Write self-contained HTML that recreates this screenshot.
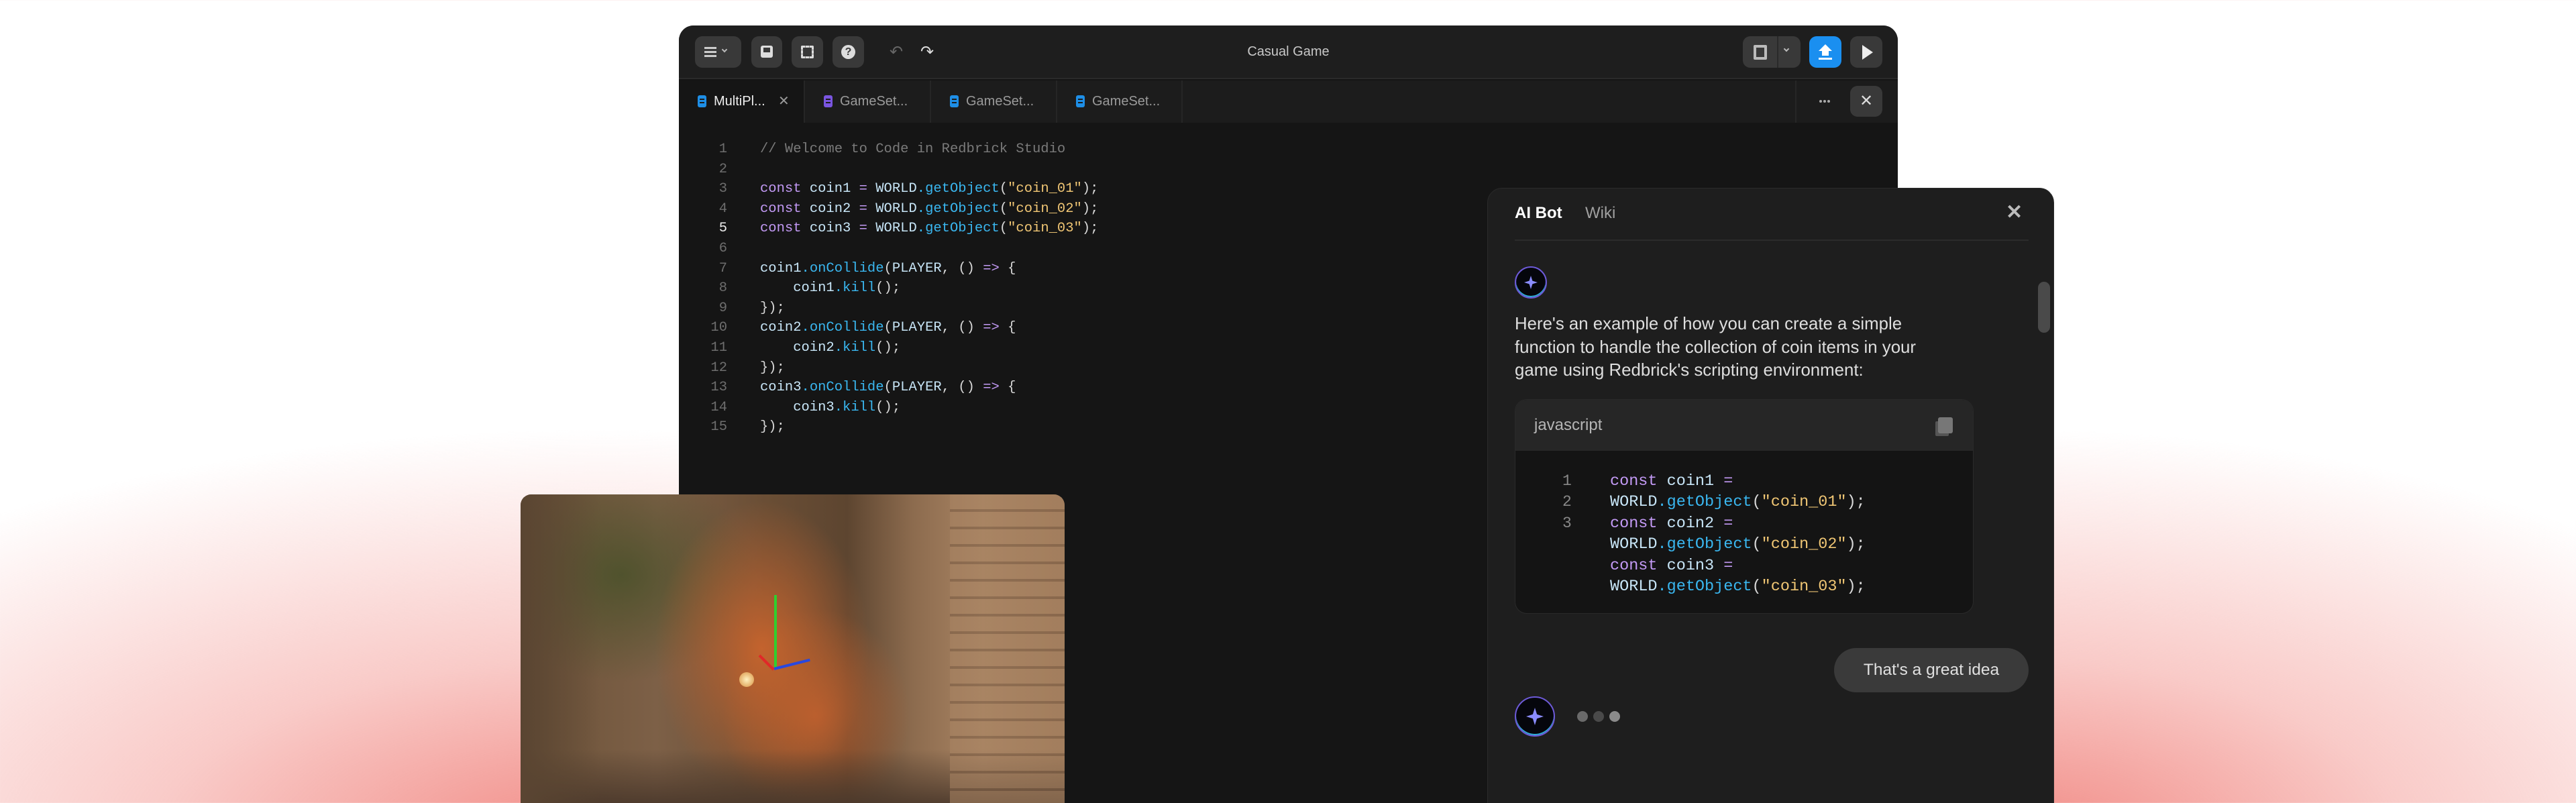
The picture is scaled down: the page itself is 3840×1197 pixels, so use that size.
<!DOCTYPE html>
<html><head><meta charset="utf-8"><style>
*{margin:0;padding:0;box-sizing:border-box}
html,body{width:3840px;height:1197px;overflow:hidden}
body{position:relative;font-family:"Liberation Sans",sans-serif;
background:
radial-gradient(ellipse 1500px 620px at 900px 1260px,rgba(240,130,124,.95),rgba(244,160,155,.55) 45%,rgba(255,255,255,0) 100%),
radial-gradient(ellipse 1300px 620px at 3000px 1260px,rgba(240,130,124,.95),rgba(244,160,155,.55) 45%,rgba(255,255,255,0) 100%),
#fff}
.mono{font-family:"Liberation Mono",monospace}
.win{position:absolute;left:1012px;top:38px;width:1817px;height:1200px;background:#151515;border-radius:22px;overflow:hidden}
.tb{position:absolute;left:0;top:0;right:0;height:80px;background:#1e1e1e;border-bottom:2px solid #2a2a2a}
.btn{position:absolute;top:16px;height:47px;background:#393939;border-radius:11px}
.tabs{position:absolute;left:0;top:82px;right:0;height:63px;background:#1c1c1c}
.tab{position:absolute;top:0;height:63px;border-right:2px solid #262626;color:#9a9a9a;font-size:20px;line-height:63px}
.tab i{position:absolute;left:28px;top:22px;width:13px;height:18px;border-radius:3px;background:#1e8ee6}
.tab i:before,.tab i:after{content:"";position:absolute;left:3px;width:7px;height:2px;background:#1c1c1c}
.tab i:before{top:5px}.tab i:after{top:10px}
.tab span{position:absolute;left:52px}
.code{position:absolute;left:0;top:170px;font-size:20.5px;line-height:29.6px;color:#c8e6f8;white-space:pre}
.ln{position:absolute;left:30px;width:42px;text-align:right;color:#6e6e6e}
.cl{position:absolute;left:121px}
.k{color:#c39af5}.m{color:#3ab7f0}.s{color:#f0c674}.p{color:#d8d8d8}.c{color:#7a7a7a}
.chat{position:absolute;left:2217px;top:280px;width:845px;height:960px;background:#1e1e1e;border-radius:22px;border:1px solid #2a2a2a;z-index:6}
.av{position:absolute;border-radius:50%;background:#05060c;border:2px solid #6d5ad8;box-shadow:inset 0 -2px 0 #2fb0d8}
.game{position:absolute;z-index:5;left:776px;top:737px;width:811px;height:470px;border-radius:16px 16px 0 0;overflow:hidden;
background:
radial-gradient(ellipse 160px 220px at 360px 230px,rgba(200,100,45,.95),rgba(170,85,40,0) 100%),
radial-gradient(ellipse 140px 160px at 440px 330px,rgba(190,95,45,.9),rgba(170,85,40,0) 100%),
radial-gradient(ellipse 200px 160px at 150px 120px,rgba(70,80,40,.8),rgba(70,80,40,0) 100%),
linear-gradient(90deg,#6b5238 0%,#7d6047 25%,#6a4e35 45%,#5d4530 60%,#8c6b4e 72%,#a98463 85%,#9a7656 100%)}
</style></head><body>

<div class="win">
 <div class="tb">
  <div class="btn" style="left:24px;width:69px">
   <div style="position:absolute;left:14px;top:16px;width:18px;height:3px;background:#ccc;box-shadow:0 6px 0 #ccc,0 12px 0 #ccc"></div>
   <div style="position:absolute;left:41px;top:17px;width:6px;height:6px;border-right:2px solid #bbb;border-bottom:2px solid #bbb;transform:rotate(45deg)"></div>
  </div>
  <div class="btn" style="left:108px;width:46px"><div style="position:absolute;left:14px;top:14px;width:18px;height:18px;background:#ddd;border-radius:3px"></div><div style="position:absolute;left:18px;top:17px;width:10px;height:7px;background:#393939"></div></div>
  <div class="btn" style="left:168px;width:47px"><div style="position:absolute;left:14px;top:14px;width:19px;height:19px;border:3px dashed #ddd;border-radius:2px"></div></div>
  <div class="btn" style="left:229px;width:47px"><div style="position:absolute;left:13px;top:13px;width:21px;height:21px;border-radius:50%;background:#ddd;color:#393939;font:bold 16px/21px 'Liberation Sans';text-align:center">?</div></div>
  <div style="position:absolute;left:314px;top:25px;color:#666;font-size:24px">&#x21B6;</div>
  <div style="position:absolute;left:360px;top:25px;color:#ddd;font-size:24px">&#x21B7;</div>
  <div style="position:absolute;left:0;right:0;top:28px;text-align:center;color:#c8c8c8;font-size:20px">Casual Game</div>
  <div class="btn" style="left:1586px;width:86px"><div style="position:absolute;left:51px;top:0;width:2px;height:47px;background:#2a2a2a"></div>
   <div style="position:absolute;left:16px;top:13px;width:20px;height:22px;border:4px solid #bbb;border-radius:2px"></div>
   <div style="position:absolute;left:62px;top:16px;width:6px;height:6px;border-right:2px solid #bbb;border-bottom:2px solid #bbb;transform:rotate(45deg)"></div></div>
  <div class="btn" style="left:1685px;width:48px;background:#1a8ff0">
   <div style="position:absolute;left:14px;top:12px;width:0;height:0;border-left:10px solid transparent;border-right:10px solid transparent;border-bottom:10px solid #fff"></div>
   <div style="position:absolute;left:19px;top:21px;width:10px;height:8px;background:#fff"></div>
   <div style="position:absolute;left:14px;top:32px;width:20px;height:3px;background:#fff"></div></div>
  <div class="btn" style="left:1746px;width:48px"><div style="position:absolute;left:18px;top:13px;border-top:11px solid transparent;border-bottom:11px solid transparent;border-left:16px solid #eee"></div></div>
 </div>
 <div class="tabs">
  <div class="tab" style="left:0;width:188px;background:#151515;color:#eee"><i></i><span>MultiPl...</span><span style="left:148px;color:#999">✕</span></div>
  <div class="tab" style="left:188px;width:188px"><i style="background:#7a55e0"></i><span>GameSet...</span></div>
  <div class="tab" style="left:376px;width:188px"><i></i><span>GameSet...</span></div>
  <div class="tab" style="left:564px;width:187px"><i></i><span>GameSet...</span></div>
  <div style="position:absolute;left:1664px;top:0;width:2px;height:63px;background:#262626"></div>
  <div style="position:absolute;left:1700px;top:29px;width:4px;height:4px;border-radius:50%;background:#aaa;box-shadow:6px 0 #aaa,12px 0 #aaa"></div>
  <div class="btn" style="left:1746px;top:8px;width:48px;height:46px;color:#ddd;font-size:24px;line-height:46px;text-align:center">✕</div>
 </div>
 <div class="code mono"><div class="ln">1<br>2<br>3<br>4<br><span style="color:#eee">5</span><br>6<br>7<br>8<br>9<br>10<br>11<br>12<br>13<br>14<br>15</div><div class="cl"><span class="c">// Welcome to Code in Redbrick Studio</span>

<span class="k">const</span> coin1 <span class="k">=</span> WORLD<span class="m">.getObject</span><span class="p">(</span><span class="s">"coin_01"</span><span class="p">);</span>
<span class="k">const</span> coin2 <span class="k">=</span> WORLD<span class="m">.getObject</span><span class="p">(</span><span class="s">"coin_02"</span><span class="p">);</span>
<span class="k">const</span> coin3 <span class="k">=</span> WORLD<span class="m">.getObject</span><span class="p">(</span><span class="s">"coin_03"</span><span class="p">);</span>

coin1<span class="m">.onCollide</span><span class="p">(</span>PLAYER<span class="p">, () </span><span class="k">=&gt;</span><span class="p"> {</span>
    coin1<span class="m">.kill</span><span class="p">();</span>
<span class="p">});</span>
coin2<span class="m">.onCollide</span><span class="p">(</span>PLAYER<span class="p">, () </span><span class="k">=&gt;</span><span class="p"> {</span>
    coin2<span class="m">.kill</span><span class="p">();</span>
<span class="p">});</span>
coin3<span class="m">.onCollide</span><span class="p">(</span>PLAYER<span class="p">, () </span><span class="k">=&gt;</span><span class="p"> {</span>
    coin3<span class="m">.kill</span><span class="p">();</span>
<span class="p">});</span></div></div>
</div>

<div class="game">
 <div style="position:absolute;left:0;top:380px;width:811px;height:90px;background:linear-gradient(180deg,rgba(60,45,35,0),#4a382b)"></div>
 <div style="position:absolute;left:640px;top:0;width:171px;height:470px;background:repeating-linear-gradient(180deg,#a98463 0 22px,#7a5c44 22px 26px);opacity:.55"></div>
 <div style="position:absolute;left:0;top:0;width:120px;height:470px;background:linear-gradient(90deg,#5a4532,rgba(90,69,50,0))"></div>
 <div style="position:absolute;left:378px;top:150px;width:4px;height:110px;background:#2ed02e"></div>
 <div style="position:absolute;left:378px;top:258px;width:55px;height:4px;background:#2848e0;transform:rotate(-14deg);transform-origin:left"></div>
 <div style="position:absolute;left:356px;top:238px;width:30px;height:4px;background:#e02828;transform:rotate(45deg);transform-origin:left"></div>
 <div style="position:absolute;left:326px;top:265px;width:22px;height:22px;border-radius:50%;background:radial-gradient(#fff2c0,#d89040)"></div>
</div>

<div class="chat">
 <div style="position:absolute;left:40px;top:23px;color:#fff;font-weight:bold;font-size:24px">AI Bot</div>
 <div style="position:absolute;left:145px;top:23px;color:#a0a0a0;font-size:24px">Wiki</div>
 <div style="position:absolute;left:772px;top:18px;color:#bbb;font-size:30px;font-weight:bold">✕</div>
 <div style="position:absolute;left:40px;top:76px;width:766px;height:2px;background:#2c2c2c"></div>
 <div style="position:absolute;left:820px;top:139px;width:18px;height:76px;border-radius:9px;background:#4a4a4a"></div>
 <div class="av" style="left:40px;top:116px;width:48px;height:48px"><div style="position:absolute;left:12px;top:12px;width:20px;height:20px;background:#8a8cff;clip-path:polygon(50% 0,62% 38%,100% 50%,62% 62%,50% 100%,38% 62%,0 50%,38% 38%)"></div></div>
 <div style="position:absolute;left:40px;top:185px;width:660px;color:#dedede;font-size:25.8px;line-height:34.5px">Here's an example of how you can create a simple function to handle the collection of coin items in your game using Redbrick's scripting environment:</div>
 <div style="position:absolute;left:40px;top:314px;width:684px;height:320px;border-radius:18px;background:#141414;border:1px solid #2a2a2a;overflow:hidden">
  <div style="height:76px;background:#262626;color:#b5b5b5;font-size:24px;line-height:76px;padding-left:28px">javascript</div>
  <div style="position:absolute;left:630px;top:26px;width:22px;height:24px;background:#777;border-radius:3px;box-shadow:-5px 5px 0 -1px #555"></div>
  <div class="mono" style="position:absolute;left:70px;top:106px;color:#888;font-size:23px;line-height:31.4px">1<br>2<br>3</div>
  <div class="mono" style="position:absolute;left:141px;top:106px;color:#c8e6f8;font-size:23.5px;line-height:31.4px;white-space:pre"><span class="k">const</span> coin1 <span class="k">=</span>
WORLD<span class="m">.getObject</span><span class="p">(</span><span class="s">"coin_01"</span><span class="p">);</span>
<span class="k">const</span> coin2 <span class="k">=</span>
WORLD<span class="m">.getObject</span><span class="p">(</span><span class="s">"coin_02"</span><span class="p">);</span>
<span class="k">const</span> coin3 <span class="k">=</span>
WORLD<span class="m">.getObject</span><span class="p">(</span><span class="s">"coin_03"</span><span class="p">);</span></div>
 </div>
 <div style="position:absolute;left:516px;top:685px;width:290px;height:66px;border-radius:33px;background:#3a3a3a;color:#e0e0e0;font-size:24.5px;line-height:66px;text-align:center">That's a great idea</div>
 <div class="av" style="left:40px;top:757px;width:60px;height:60px"><div style="position:absolute;left:15px;top:15px;width:26px;height:26px;background:#8a8cff;clip-path:polygon(50% 0,62% 38%,100% 50%,62% 62%,50% 100%,38% 62%,0 50%,38% 38%)"></div></div>
 <div style="position:absolute;left:133px;top:779px;width:16px;height:16px;border-radius:50%;background:#6a6a6a"></div>
 <div style="position:absolute;left:157px;top:779px;width:16px;height:16px;border-radius:50%;background:#4a4a4a"></div>
 <div style="position:absolute;left:181px;top:779px;width:16px;height:16px;border-radius:50%;background:#8a8a8a"></div>
</div>
</body></html>
